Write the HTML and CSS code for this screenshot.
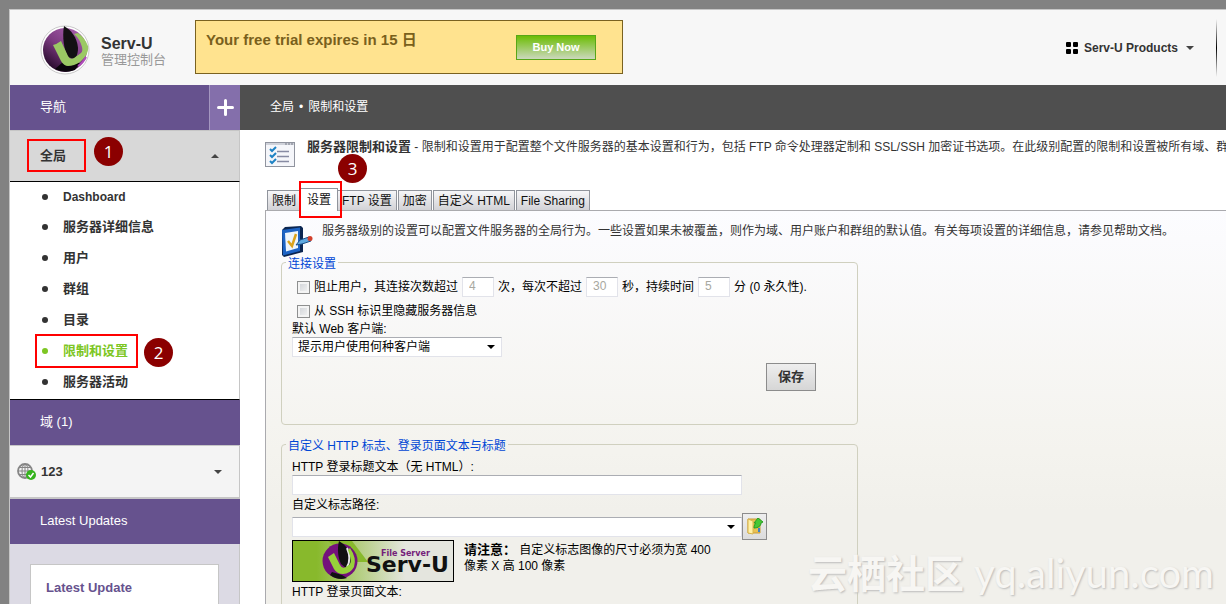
FILE: index.html
```
<!DOCTYPE html>
<html lang="zh-CN">
<head>
  <meta charset="UTF-8" />
  <meta name="viewport" content="width=device-width, initial-scale=1" />
  <title>Serv-U 管理控制台</title>
  <link rel="stylesheet" href="styles.css">
</head>
<body>
  <div class="app">
    <header class="topbar">
      <svg class="logo" viewBox="0 0 50 50" aria-hidden="true">
        <defs>
          <linearGradient id="sphere" x1="0.8" y1="0.1" x2="0.2" y2="0.9">
            <stop offset="0" stop-color="#a35aa8" />
            <stop offset="0.5" stop-color="#7b3a80" />
            <stop offset="1" stop-color="#2c0d30" />
          </linearGradient>
          <g id="mark">
            <circle cx="25" cy="25" r="22" fill="url(#sphere)" />
            <path d="M23 37 L15 44 Q25 49 35 45 L40 38 Z" fill="#0b050c" />
            <path d="M24 1 C31 5 37 12 38 23 C38 29 36 33 34 34 L28 32 C24 25 22 12 24 1 Z" fill="#131013" />
            <path d="M13 20 Q17 19 21 16 L28 31 Q30 35 34 33 L41 28 Q43 26 42 22 Q40 14 34 9 L38 8 Q45 13 48 21 Q49 26 45 32 L40 37 Q34 41 28 41 Q24 41 21 36 Z" fill="#9bc964" />
            <path d="M46 32 Q43 38 38 41" fill="none" stroke="#b04cbb" stroke-width="2" />
          </g>
        </defs>
        <circle cx="25" cy="25" r="24" fill="#fff" stroke="#c9c9c9" />
        <use href="#mark" />
      </svg>
      <div class="brand">
        <strong>Serv-U</strong>
        <span>管理控制台</span>
      </div>
      <div class="trial">
        <p>Your free trial expires in 15 日</p>
        <button type="button" class="buy">Buy Now</button>
      </div>
      <button type="button" class="products">
        <svg width="12" height="12" viewBox="0 0 12 12" aria-hidden="true">
          <rect width="5" height="5" rx="1" /><rect x="7" width="5" height="5" rx="1" />
          <rect y="7" width="5" height="5" rx="1" /><rect x="7" y="7" width="5" height="5" rx="1" />
        </svg>
        Serv-U Products
        <i class="caret"></i>
      </button>
      <div class="divider"></div>
    </header>

    <div class="columns">
      <aside class="sidebar">
        <div class="heading">
          <h2>导航</h2>
          <button type="button" class="add" aria-label="添加">
            <svg width="17" height="17" viewBox="0 0 17 17"><path d="M8.500 1.500v14M1.500 8.500h14" stroke="#fff" stroke-width="3" stroke-linecap="round" /></svg>
          </button>
        </div>
        <div class="group open">
          <span class="callout callout-global"><b class="step">1</b></span>
          <span>全局</span>
          <i class="caret up"></i>
        </div>
        <ul class="menu">
          <li><a href="#">Dashboard</a></li>
          <li><a href="#">服务器详细信息</a></li>
          <li><a href="#">用户</a></li>
          <li><a href="#">群组</a></li>
          <li><a href="#">目录</a></li>
          <li class="current"><a href="#">限制和设置</a><span class="callout callout-limits"><b class="step">2</b></span></li>
          <li><a href="#">服务器活动</a></li>
        </ul>
        <div class="heading"><h2>域 (1)</h2></div>
        <div class="group domain">
          <svg width="20" height="18" viewBox="0 0 20 18" aria-hidden="true">
            <g fill="none" stroke="#858585">
              <circle cx="8" cy="8" r="7" fill="#f4f4f4" stroke-width="1.800" />
              <ellipse cx="8" cy="8" rx="3" ry="7" />
              <path d="M8 1v14M1 8h14M2 4.500h12M2 11.500h12" />
            </g>
            <circle cx="14" cy="12" r="5" fill="#35b31d" />
            <path d="M11.500 12l2 2 3-4" fill="none" stroke="#fff" stroke-width="1.500" />
          </svg>
          <span>123</span>
          <i class="caret"></i>
        </div>
        <div class="heading"><h2>Latest Updates</h2></div>
        <div class="updates">
          <div class="card"><h3>Latest Update</h3></div>
        </div>
      </aside>

      <main class="main">
        <div class="crumbs">全局<span>•</span>限制和设置</div>
        <div class="content">
          <div class="intro">
            <svg width="30" height="26" viewBox="0 0 30 26" aria-hidden="true">
              <rect x="0.500" y="0.500" width="29" height="24" fill="#f5f6fa" stroke="#90949f" />
              <path d="M1 2h28" stroke="#cfd2da" stroke-width="2" />
              <path d="M20 2h2M23 2h2M26 2h2" stroke="#777b88" />
              <path d="M5 7l2 2 4-4M5 13l2 2 4-4M5 19l2 2 4-4" fill="none" stroke="#1f83c4" stroke-width="2" />
              <path d="M12 9.500h12M12 14.500h12M12 19.500h12" stroke="#878ba3" stroke-width="1.500" />
            </svg>
            <p><strong>服务器限制和设置</strong> - 限制和设置用于配置整个文件服务器的基本设置和行为，包括 FTP 命令处理器定制和 SSL/SSH 加密证书选项。在此级别配置的限制和设置被所有域、群</p>
          </div>

          <div class="tabs" role="tablist">
            <button type="button" role="tab">限制</button>
            <button type="button" role="tab" class="active" aria-selected="true">设置<span class="callout callout-tab"><b class="step">3</b></span></button>
            <button type="button" role="tab">FTP 设置</button>
            <button type="button" role="tab">加密</button>
            <button type="button" role="tab">自定义 HTML</button>
            <button type="button" role="tab">File Sharing</button>
          </div>

          <div class="panel">
            <div class="panel-intro">
              <svg width="32" height="34" viewBox="0 0 32 34" aria-hidden="true">
                <path d="M1 5L4 2 20 1 22 3 22 27 3 32 1 30Z" fill="#0b2550" />
                <path d="M1 5L19 2.500V26L2 30.500Z" fill="#1d63c4" />
                <path d="M4 8L17 6V23L5 26.500Z" fill="#eef5fc" />
                <path d="M7 16l4 5 4-12" fill="none" stroke="#dba21b" stroke-width="2.500" />
                <path d="M15 20l4-5 9-3 2 4-9 3Z" fill="#5fa9e0" stroke="#1b4f86" />
                <circle cx="29" cy="13.500" r="2.500" fill="#d3402c" />
              </svg>
              <p>服务器级别的设置可以配置文件服务器的全局行为。一些设置如果未被覆盖，则作为域、用户账户和群组的默认值。有关每项设置的详细信息，请参见帮助文档。</p>
            </div>

            <fieldset>
              <legend>连接设置</legend>
              <div class="row block-row">
                <input type="checkbox" id="block-user" />
                <label for="block-user">阻止用户，其连接次数超过</label>
                <input type="text" class="num" value="4" aria-label="次数" disabled />
                <span>次，每次不超过</span>
                <input type="text" class="num" value="30" aria-label="秒" disabled />
                <span>秒，持续时间</span>
                <input type="text" class="num" value="5" aria-label="分" disabled />
                <span>分 (0 永久性).</span>
              </div>
              <div class="row">
                <input type="checkbox" id="hide-ssh" />
                <label for="hide-ssh">从 SSH 标识里隐藏服务器信息</label>
              </div>
              <label class="field-label" for="web-client">默认 Web 客户端:</label>
              <div class="select client">
                <select id="web-client"><option>提示用户使用何种客户端</option></select>
              </div>
              <div class="actions"><button type="button" class="save">保存</button></div>
            </fieldset>

            <fieldset>
              <legend>自定义 HTTP 标志、登录页面文本与标题</legend>
              <label class="field-label" for="login-title">HTTP 登录标题文本（无 HTML）:</label>
              <input type="text" id="login-title" class="wide" />
              <label class="field-label" for="logo-path">自定义标志路径:</label>
              <div class="path-row">
                <div class="select wide">
                  <select id="logo-path"><option></option></select>
                </div>
                <button type="button" class="browse" aria-label="浏览">
                  <svg width="16" height="17" viewBox="0 0 16 17">
                    <path d="M1 1h12v14H1z" fill="#e9c052" stroke="#c99b35" />
                    <path d="M1 1l5 2v13l-5-1z" fill="#fff1a5" stroke="#d8b44d" />
                    <path d="M7 10c0-3 1-4 2-5L7 5l4-5 5 4-2 1c0 3-3 5-7 5z" fill="#46c735" stroke="#279d23" />
                    <path d="M12 10v4" stroke="#3c82c8" stroke-width="2" />
                  </svg>
                </button>
              </div>
              <div class="logo-row">
                <svg class="banner" viewBox="0 0 162 42" role="img" aria-label="Serv-U File Server">
                  <defs>
                    <linearGradient id="banner-bg">
                      <stop offset="0.15" stop-color="#88b92c" />
                      <stop offset="0.7" stop-color="#e4e5de" />
                    </linearGradient>
                  </defs>
                  <rect x="0.500" y="0.500" width="161" height="41" fill="url(#banner-bg)" stroke="#000" />
                  <path d="M36 1H60L76 22H60Z" fill="#88b92c" />
                  <circle cx="48" cy="21" r="17.500" fill="#74127c" />
                  <path d="M47 1C54 5 59 12 59 20C59 26 57 28 54 28L49 24C46 18 45 9 47 1Z" fill="#111" />
                  <path d="M55 8C58 15 58 22 55 27" fill="none" stroke="#e6e6e6" stroke-width="2" />
                  <path d="M36 17L42 13L48 25Q50 29 54 27L58 24Q60 20 56 10L58 8Q65 18 62 27Q58 34 51 34Q45 34 42 29Z" fill="#97d13a" />
                  <path d="M40 32L50 35L55 38Q46 41 38 35Z" fill="#111" />
                  <text x="89" y="16" class="banner-small">File Server</text>
                  <text x="74" y="32" class="banner-name">Serv-U</text>
                </svg>
                <p><strong>请注意：</strong> 自定义标志图像的尺寸必须为宽 400 像素 X 高 100 像素</p>
              </div>
              <label class="field-label" for="login-text">HTTP 登录页面文本:</label>
              <textarea id="login-text" class="page-text" rows="4"></textarea>
            </fieldset>
          </div>
        </div>
      </main>
    </div>
    <div class="watermark"><b>云栖社区</b> yq.aliyun.com</div>
  </div>
</body>
</html>
```

FILE: styles.css
```
* {
  box-sizing: border-box;
}
body {
  margin: 0;
  padding: 9px 0 0 9px;
  background: #828282;
  color: #333;
  font: 12px/16px "Liberation Sans", "Noto Sans CJK SC", sans-serif;
}
h2, h3, p, ul {
  margin: 0;
  padding: 0;
}
button, input, select, textarea {
  font: inherit;
  color: inherit;
  margin: 0;
}
button {
  padding: 0;
  cursor: pointer;
}
a {
  color: inherit;
  text-decoration: none;
}
svg {
  flex: none;
}
.app {
  position: relative;
  display: flex;
  flex-direction: column;
  height: calc(100vh - 9px);
  overflow: hidden;
  border: 1px solid #c6c6c6;
  border-width: 1px 0 0 1px;
  background: #fff;
}

/* top bar */
.topbar {
  flex: none;
  display: flex;
  align-items: center;
  height: 75px;
  padding: 0 9px 0 30px;
  background: #f7f7f7;
}
.logo {
  width: 50px;
  height: 50px;
  margin-top: 4px;
}
.brand {
  display: flex;
  flex-direction: column;
  width: 94px;
  margin: 9px 0 0 11px;
}
.brand strong {
  font-size: 16px;
}
.brand span {
  font-size: 13px;
  color: #999;
}
.trial {
  display: flex;
  justify-content: space-between;
  width: 428px;
  height: 54px;
  margin-bottom: 2px;
  padding: 11px 26px 0 10px;
  border: 1px solid #7a6220;
  background: #ffe38f;
  color: #79601c;
  font-size: 15px;
  font-weight: bold;
}
.buy {
  width: 80px;
  height: 25px;
  margin-top: 3px;
  border: 1px solid #58a618;
  background: linear-gradient(#6cbd05, #ccd8bd);
  color: #fff;
  font-size: 11px;
  font-weight: bold;
}
.products {
  display: flex;
  align-items: center;
  gap: 6px;
  margin-left: auto;
  border: 0;
  background: none;
  font-weight: bold;
}
.caret {
  border: 4px solid transparent;
  border-top-color: #444;
  border-bottom: 0;
}
.caret.up {
  border-bottom: 4px solid #444;
  border-top: 0;
}
.products .caret {
  margin-left: 2px;
}
.divider {
  width: 1px;
  height: 58px;
  margin-left: 22px;
  background: linear-gradient(transparent, #000, transparent);
}
.columns {
  flex: 1;
  display: flex;
  min-height: 0;
}

/* sidebar */
.sidebar {
  flex: none;
  display: flex;
  flex-direction: column;
  width: 230px;
}
.heading {
  flex: none;
  display: flex;
  align-items: center;
  justify-content: space-between;
  height: 45px;
  padding-left: 30px;
  background: #66528e;
  color: #fff;
}
.heading h2 {
  padding-bottom: 2px;
  font-size: 13px;
  font-weight: normal;
}
.add {
  display: grid;
  place-items: center;
  width: 31px;
  height: 45px;
  border: 0;
  border-left: 1px solid #a497c0;
  background: #846fab;
}
.group {
  position: relative;
  flex: none;
  display: flex;
  align-items: center;
  height: 52px;
  padding: 0 20px 0 30px;
  border: 1px solid #c6c6c6;
  border-left: 0;
  font-size: 13px;
  font-weight: bold;
}
.group .caret {
  margin-left: auto;
}
.open {
  border-bottom-color: #000;
  background: #d8d8d8;
}
.domain {
  height: 54px;
  padding: 0 17px 0 7px;
  gap: 4px;
  border-bottom-width: 2px;
  background: #f4f4f4;
}
.menu {
  padding: 1px 0 2px;
  border-right: 1px solid #c6c6c6;
  border-bottom: 1px solid #000;
  font-weight: bold;
  list-style: none;
}
.menu li {
  position: relative;
  display: flex;
  align-items: center;
  height: 31px;
  padding-left: 32px;
  font-size: 13px;
}
.menu li:first-child {
  height: 28px;
  font-size: 12px;
}
.menu li::before {
  content: "";
  width: 6px;
  height: 6px;
  margin-right: 15px;
  border-radius: 50%;
  background: #333;
}
.menu .current {
  color: #7dc623;
}
.menu .current::before {
  background: #7dc623;
}
.updates {
  flex: 1;
  padding: 20px 20px 0;
  border-right: 1px solid #c6c6c6;
  background: #dcdae4;
}
.card {
  height: 100%;
  padding: 15px;
  border: 1px solid #c6c6c6;
  border-bottom: 0;
  background: #fff;
}
.card h3 {
  color: #66528e;
  font-size: 13px;
}

/* red frames with numbered steps */
.callout {
  position: absolute;
  z-index: 1;
  border: 2px solid #f00;
}
.callout-global {
  left: 17px;
  top: 8px;
  width: 59px;
  height: 33px;
}
.callout-limits {
  left: 25px;
  top: -1px;
  width: 103px;
  height: 34px;
}
.callout-tab {
  left: -2px;
  top: -8px;
  width: 43px;
  height: 37px;
}
.step {
  position: absolute;
  left: calc(100% + 8px);
  top: -2px;
  width: 29px;
  height: 29px;
  border-radius: 50%;
  background: #8b0000;
  color: #fff;
  font: 17px/29px "Open Sans", sans-serif;
  text-align: center;
}
.callout-global .step {
  left: calc(100% + 10px);
  top: -4px;
}
.callout-limits .step {
  top: 2px;
}
.callout-tab .step {
  left: 37px;
  top: -29px;
}

/* main column */
.main {
  flex: 1;
  min-width: 0;
  display: flex;
  flex-direction: column;
}
.crumbs {
  flex: none;
  height: 45px;
  padding-left: 30px;
  background: #4f4f4f;
  color: #fff;
  line-height: 45px;
}
.crumbs span {
  margin: 0 5px;
}
.content {
  flex: 1;
  display: flex;
  flex-direction: column;
  min-height: 0;
  padding: 9px 0 0 25px;
}
.intro {
  flex: none;
  display: flex;
  gap: 12px;
  height: 49px;
  overflow: hidden;
  white-space: nowrap;
}
.intro svg {
  margin-top: 3px;
}
.intro strong {
  font-size: 13px;
}
.tabs {
  flex: none;
  display: flex;
  align-items: flex-end;
  gap: 1px;
  padding-left: 2px;
}
.tabs button {
  height: 20px;
  padding: 0 4px;
  border: 1px solid #90949c;
  border-bottom: 0;
  background: linear-gradient(#f6f6f8, #d2d2d6);
  color: #111;
  line-height: 18px;
}
.tabs .active {
  position: relative;
  z-index: 1;
  height: 23px;
  padding: 0 6px;
  margin: 0 -2px -1px;
  background: #fff;
}
.panel {
  flex: 1;
  padding: 12px 15px 0;
  border: 1px solid #aaaaae;
  border-width: 1px 0 0 1px;
  background: linear-gradient(#fcfcff, #f4f3ee 240px, #f1f0eb 300px);
}
.panel-intro {
  display: flex;
  gap: 9px;
  height: 30px;
}
.panel-intro svg {
  margin-top: 2px;
}
fieldset {
  max-width: 577px;
  margin: 0 0 10px;
  padding: 4px 41px 33px 10px;
  border: 1px solid #d0d0bf;
  border-radius: 4px;
  color: #000;
}
legend {
  margin-left: -6px;
  padding: 4px 2px 0;
  color: #0046d5;
  line-height: 14px;
}
.row {
  display: flex;
  align-items: center;
  gap: 4px;
  padding-left: 5px;
}
.block-row {
  margin: 2px 0 6px;
}
input[type="checkbox"] {
  appearance: none;
  width: 13px;
  height: 13px;
  border: 1px solid #8e8f8f;
  background: linear-gradient(135deg, #cdd0d5, #f6f6f6);
  box-shadow: inset 0 0 0 2px #f4f4f4;
}
input[type="text"], select, textarea {
  border: 1px solid #e2e3ea;
  border-top-color: #abadb3;
  border-radius: 0;
  background: #fff;
}
.num {
  width: 32px;
  height: 20px;
  padding: 0 6px 2px;
}
.num:disabled {
  color: #a8a8a0;
}
.field-label {
  display: block;
  margin-top: 2px;
}
.wide {
  display: block;
  width: 450px;
  height: 20px;
}
.select {
  position: relative;
}
.select::after {
  content: "";
  position: absolute;
  right: 7px;
  top: 8px;
  border: 4px solid transparent;
  border-top-color: #000;
  border-bottom: 0;
  pointer-events: none;
}
.client {
  width: 210px;
}
select {
  appearance: none;
  display: block;
  width: 100%;
  height: 20px;
  padding: 0 5px;
}
.actions {
  display: flex;
  justify-content: flex-end;
  margin-top: 6px;
}
.save {
  width: 50px;
  height: 28px;
  border: 1px solid #8c8c8c;
  background: linear-gradient(#eee, #d6d6d6);
  color: #333;
  font-size: 13px;
  font-weight: bold;
}
.path-row {
  display: flex;
  align-items: center;
}
.browse {
  display: grid;
  place-items: center;
  width: 25px;
  height: 27px;
  border: 1px solid #8c8c8c;
  background: linear-gradient(#eee, #dcdcdc);
}
.logo-row {
  display: flex;
  gap: 10px;
}
.logo-row p {
  width: 260px;
  padding-top: 2px;
}
.logo-row strong {
  font-size: 13px;
  line-height: 14px;
}
.banner {
  width: 162px;
  height: 42px;
}
.banner-small {
  fill: #74217a;
  font: bold 8px "DejaVu Sans", sans-serif;
}
.banner-name {
  fill: #111;
  font: bold 22px "DejaVu Sans", sans-serif;
}
.page-text {
  display: block;
  width: 450px;
  margin-top: 6px;
}
.watermark {
  position: absolute;
  right: 12px;
  bottom: 8px;
  color: #f7f6f3;
  font: 40px/46px Lato, "Noto Sans CJK SC", sans-serif;
  text-shadow: 1px 1px 2px #bbb;
  white-space: nowrap;
  pointer-events: none;
}
.watermark b {
  font-size: 39px;
  font-weight: 700;
}
```
